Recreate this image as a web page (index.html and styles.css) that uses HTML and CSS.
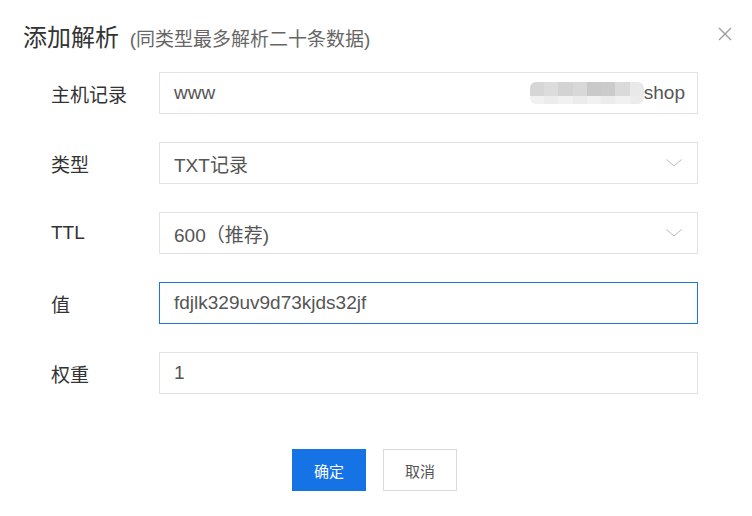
FILE: index.html
```html
<!DOCTYPE html>
<html lang="zh-CN">
<head>
  <meta charset="UTF-8">
  <title>添加解析</title>
  <link rel="stylesheet" href="styles.css">
</head>
<body>

  <div class="dialog">
    <div class="dialog-header">
      <h2 class="title">添加解析 <span class="subtitle">(同类型最多解析二十条数据)</span></h2>
      <button class="close-btn" type="button" aria-label="关闭">
        <svg width="14" height="14" viewBox="0 0 14 14"><path d="M1 1L13 13M13 1L1 13" stroke="#9a9a9a" stroke-width="1.3" fill="none"/></svg>
      </button>
    </div>

    <form class="record-form">
      <div class="form-row">
        <label class="form-label">主机记录</label>
        <div class="field">
          <span class="field-text">www</span>
          <span class="suffix">
            <span class="blur">
              <span class="blur-top"><i class="c1"></i><i class="c2"></i><i class="c3"></i><i class="c4"></i><i class="c5"></i><i class="c6"></i><i class="c7"></i><i class="c8"></i></span>
              <span class="blur-bottom"><i></i><i></i><i></i><i></i><i></i><i></i><i></i><i></i></span>
            </span>
            <span class="field-text">shop</span>
          </span>
        </div>
      </div>

      <div class="form-row">
        <label class="form-label">类型</label>
        <div class="field select">
          <span class="field-text">TXT记录</span>
          <svg class="chevron" width="16" height="8" viewBox="0 0 16 8"><path d="M0.5 0.5L8 7L15.5 0.5" stroke="#b8b8b8" stroke-width="1" fill="none"/></svg>
        </div>
      </div>

      <div class="form-row">
        <label class="form-label">TTL</label>
        <div class="field select">
          <span class="field-text">600（推荐)</span>
          <svg class="chevron" width="16" height="8" viewBox="0 0 16 8"><path d="M0.5 0.5L8 7L15.5 0.5" stroke="#b8b8b8" stroke-width="1" fill="none"/></svg>
        </div>
      </div>

      <div class="form-row">
        <label class="form-label">值</label>
        <div class="field focused">
          <span class="field-text">fdjlk329uv9d73kjds32jf</span>
        </div>
      </div>

      <div class="form-row">
        <label class="form-label">权重</label>
        <div class="field">
          <span class="field-text">1</span>
        </div>
      </div>
    </form>

    <div class="dialog-footer">
      <button class="btn btn-primary" type="button">确定</button>
      <button class="btn btn-default" type="button">取消</button>
    </div>
  </div>

</body>
</html>
```

FILE: styles.css
```css
body {
  margin: 0;
  background-color: #ffffff;
  font-family: "Liberation Sans", "Noto Sans CJK SC", sans-serif;
  color: #333;
}

.dialog {
  width: 752px;
  height: 516px;
  box-sizing: border-box;
}

.dialog-header {
  display: flex;
  justify-content: space-between;
  align-items: center;
  padding: 22px 20px 0 23px;
}

.title {
  margin: 0;
  font-size: 24px;
  font-weight: normal;
  line-height: 32px;
  color: #333;
}

.subtitle {
  font-size: 19px;
  color: #666;
  margin-left: 4px;
}

.close-btn {
  border: none;
  background: none;
  padding: 0;
  width: 14px;
  height: 14px;
  cursor: pointer;
  margin-top: -10px;
}

.record-form {
  display: flex;
  flex-direction: column;
  gap: 28px;
  margin-top: 16px;
  padding-left: 51px;
}

.form-row {
  display: flex;
  align-items: center;
  height: 42px;
}

.form-label {
  width: 108px;
  font-size: 19px;
  color: #333;
}

.field {
  width: 539px;
  height: 42px;
  box-sizing: border-box;
  border: 1px solid #dfe2e8;
  display: flex;
  align-items: center;
  justify-content: space-between;
  padding: 0 12px 0 14px;
}

.field.focused {
  border-color: #1d74e0;
}

.field-text {
  font-size: 19px;
  color: #555;
}

.suffix {
  display: flex;
  align-items: center;
}

.blur {
  display: flex;
  flex-direction: column;
  width: 114px;
  height: 22px;
  border-radius: 6px;
  overflow: hidden;
  margin-right: 0;
}

.blur-top,
.blur-bottom {
  display: flex;
}

.blur-top {
  height: 14px;
}

.blur-bottom {
  height: 8px;
}

.blur i {
  flex: 1;
}

.blur-top .c1 { background: #d6d6d6; }
.blur-top .c2 { background: #dcdcdc; }
.blur-top .c3 { background: #d3d3d3; }
.blur-top .c4 { background: #d8d8d8; }
.blur-top .c5 { background: #c9c9c9; }
.blur-top .c6 { background: #cbcbcb; }
.blur-top .c7 { background: #dadada; }
.blur-top .c8 { background: #e9e9e9; }

.blur-bottom i { background: #f1f1f1; }
.blur-bottom i:nth-child(even) { background: #ececec; }

.chevron {
  margin-right: 3px;
}

.dialog-footer {
  display: flex;
  justify-content: center;
  gap: 17px;
  margin-top: 55px;
  padding-right: 3px;
}

.btn {
  width: 74px;
  height: 42px;
  font-family: inherit;
  font-size: 15px;
  cursor: pointer;
}

.btn-primary {
  background-color: #1673e6;
  color: #fff;
  border: none;
}

.btn-default {
  background-color: #fff;
  color: #555;
  border: 1px solid #dadada;
}
```
